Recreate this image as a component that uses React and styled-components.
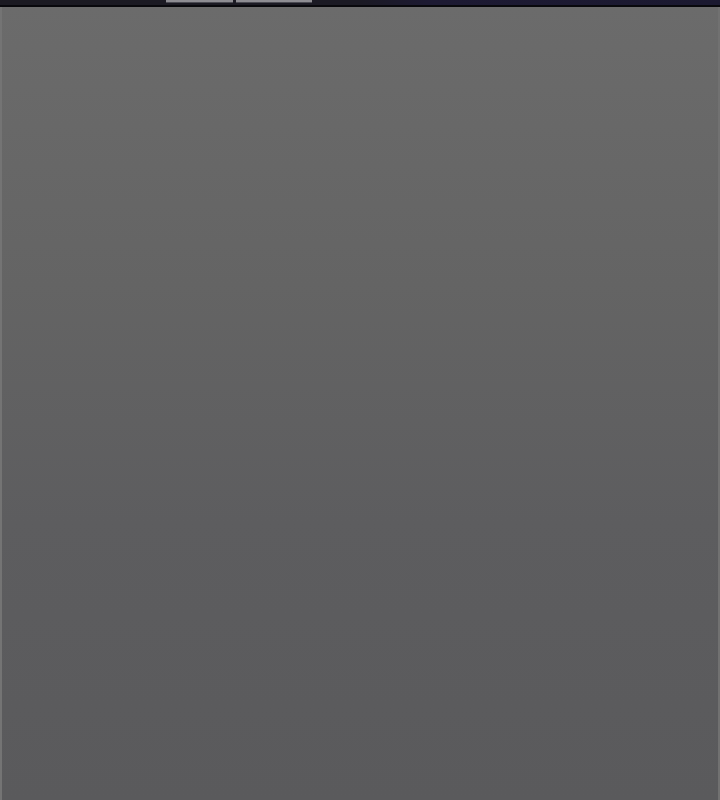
import styled, { createGlobalStyle } from 'styled-components';

const GlobalStyle = createGlobalStyle`
    html, body {
        margin: 0;
        padding: 0;
        background: #5b5b5d;
        font-family: "Liberation Sans", Arial, sans-serif;
    }
`;

const Page = styled.div`
    width: 720px;
    height: 800px;
    display: flex;
    flex-direction: column;
    overflow: hidden;
`;

const TopBar = styled.div`
    height: 5px;
    display: flex;
    background: linear-gradient(90deg, #1b1a22 0%, #1b1a24 50%, #1d1a33 60%, #1b1930 100%);
    border-bottom: 2px solid #08080c;
`;

const Tab = styled.div`
    width: ${(p) => p.w}px;
    margin-left: ${(p) => p.gap}px;
    height: 2px;
    background: ${(p) => (p.light ? '#8e8d93' : 'transparent')};
    border-bottom: 1px solid ${(p) => (p.light ? '#4a4a52' : 'transparent')};
`;

const Panel = styled.div`
    flex: 1;
    display: flex;
    background: linear-gradient(180deg, #6b6b6b 0%, #646464 35%, #5d5d5f 65%, #5a5a5c 100%);
`;

const Edge = styled.div`
    width: 2px;
    background: ${(p) => p.color};
`;

const Content = styled.div`
    flex: 1;
`;

function App() {
    return (
        <Page>
            <GlobalStyle />
            <TopBar>
                <Tab w={166} gap={0} />
                <Tab light w={67} gap={0} />
                <Tab light w={76} gap={3} />
            </TopBar>
            <Panel>
                <Edge color="#747474" />
                <Content />
                <Edge color="#717171" />
            </Panel>
        </Page>
    );
}

export default App;
